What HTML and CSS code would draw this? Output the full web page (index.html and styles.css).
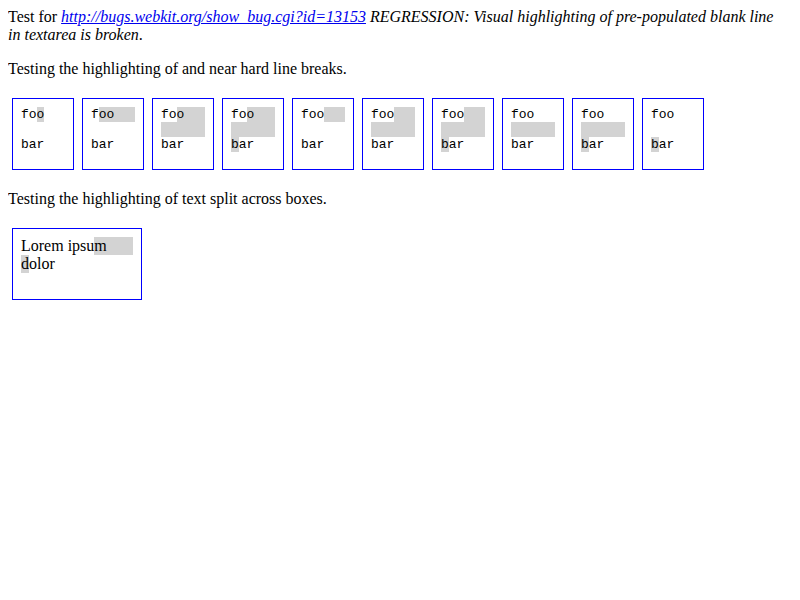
FILE: index.html
```html
<!DOCTYPE html>
<html>
<head>
<meta charset="utf-8">
<link rel="stylesheet" href="styles.css">
</head>
<body>
<p class="intro">Test for <a class="bug" href="#"><i>http://bugs.webkit.org/show_bug.cgi?id=13153</i></a> <i>REGRESSION: Visual highlighting of pre-populated blank line<br>in textarea is broken</i>.</p>
<p>Testing the highlighting of and near hard line breaks.</p>
<div class="row">
  <div class="box">
    <div class="line">fo<span class="hl">o</span></div>
    <div class="line"></div>
    <div class="line">bar</div>
  </div>
  <div class="box">
    <div class="line">f<span class="hl">oo</span><span class="fill"></span></div>
    <div class="line"></div>
    <div class="line">bar</div>
  </div>
  <div class="box">
    <div class="line">fo<span class="hl">o</span><span class="fill"></span></div>
    <div class="line full"></div>
    <div class="line">bar</div>
  </div>
  <div class="box">
    <div class="line">fo<span class="hl">o</span><span class="fill"></span></div>
    <div class="line full"></div>
    <div class="line"><span class="hl">b</span>ar</div>
  </div>
  <div class="box">
    <div class="line">foo<span class="fill"></span></div>
    <div class="line"></div>
    <div class="line">bar</div>
  </div>
  <div class="box">
    <div class="line">foo<span class="fill"></span></div>
    <div class="line full"></div>
    <div class="line">bar</div>
  </div>
  <div class="box">
    <div class="line">foo<span class="fill"></span></div>
    <div class="line full"></div>
    <div class="line"><span class="hl">b</span>ar</div>
  </div>
  <div class="box">
    <div class="line">foo</div>
    <div class="line full"></div>
    <div class="line">bar</div>
  </div>
  <div class="box">
    <div class="line">foo</div>
    <div class="line full"></div>
    <div class="line"><span class="hl">b</span>ar</div>
  </div>
  <div class="box">
    <div class="line">foo</div>
    <div class="line"></div>
    <div class="line"><span class="hl">b</span>ar</div>
  </div>
</div>
<p>Testing the highlighting of text split across boxes.</p>
<div class="row">
  <div class="box wide">
    <div class="line">Lorem ipsu<span class="hl">m</span><span class="fill"></span></div>
    <div class="line"><span class="hl">d</span>olor</div>
  </div>
</div>
</body>
</html>
```

FILE: styles.css
```css
body {
  margin: 8px;
  font-family: "Liberation Serif", "Times New Roman", serif;
  font-size: 16px;
  line-height: 18px;
  color: #000;
  background: #fff;
}
p {
  margin: 16px 0;
}
p.intro {
  margin-top: 0;
}
.bug {
  color: #0000ee;
  text-decoration: underline;
}
.row {
  display: flex;
  gap: 8px;
  padding: 4px;
}
.box {
  width: 44px;
  height: 54px;
  padding: 8px;
  border: 1px solid #0000ff;
  font-family: "Liberation Mono", "Courier New", monospace;
  font-size: 13px;
  line-height: 15px;
  flex: none;
}
.box.wide {
  width: 112px;
  font-family: "Liberation Serif", "Times New Roman", serif;
  font-size: 16px;
  line-height: 18px;
}
.line {
  display: flex;
  height: 15px;
  white-space: pre;
}
.wide .line {
  height: 18px;
}
.hl {
  background: #d3d3d3;
}
.fill {
  flex: 1;
  background: #d3d3d3;
}
.full {
  background: #d3d3d3;
}
```
